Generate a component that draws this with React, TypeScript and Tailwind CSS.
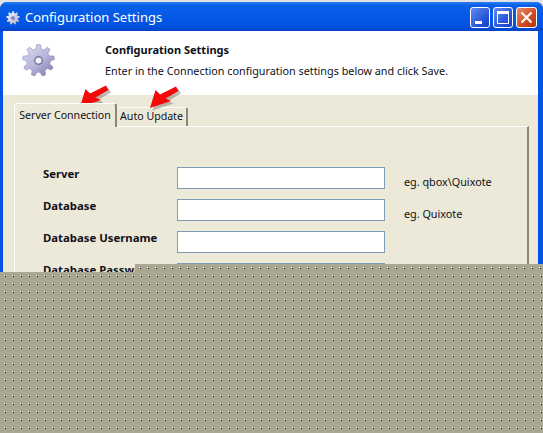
function gearPath(cx: number, cy: number, ro: number, ri: number, n: number) {
  const pts: string[] = [];
  for (let i = 0; i < n; i++) {
    const a = (i / n) * Math.PI * 2 - Math.PI / 2;
    const s = (Math.PI * 2) / n;
    const list: [number, number][] = [
      [ri, a - s * 0.32],
      [ro, a - s * 0.16],
      [ro, a + s * 0.16],
      [ri, a + s * 0.32],
    ];
    for (const [r, t] of list) pts.push(`${(cx + r * Math.cos(t)).toFixed(2)} ${(cy + r * Math.sin(t)).toFixed(2)}`);
  }
  return "M" + pts.join("L") + "Z";
}

function Gear({ size, small }: { size: number; small?: boolean }) {
  return (
    <svg width={size} height={size} viewBox="0 0 32 32" className="block">
      <defs>
        <linearGradient id={small ? "gs" : "gl"} x1="0.1" y1="0" x2="0.9" y2="1">
          <stop offset="0" stopColor={small ? "#f2f1fb" : "#dcdcf2"} />
          <stop offset="0.55" stopColor={small ? "#d2d0e8" : "#b4b3dc"} />
          <stop offset="1" stopColor={small ? "#a8a8c8" : "#7d7da8"} />
        </linearGradient>
      </defs>
      <path d={gearPath(16, 16, 15.5, 11.5, 9)} fill={`url(#${small ? "gs" : "gl"})`} stroke={small ? "none" : "#9090b4"} strokeWidth="0.6" />
      <circle cx="16" cy="16" r="3.6" fill={small ? "#6f8fdc" : "#f4f4f8"} stroke="#77779c" strokeWidth="1.4" />
    </svg>
  );
}

function Arrow() {
  return (
    <svg width="38" height="34" viewBox="0 0 38 34" className="block">
      <path d="M5 23 L10.5 5 L15 9.5 L31 1.5 L33.5 6 L20.5 13.5 L26 16 Z" fill="#5f5f55" opacity="0.4" transform="translate(2.5 2.5)" />
      <path d="M5 23 L10.5 5 L15 9.5 L31 1.5 L33.5 6 L20.5 13.5 L26 16 Z" fill="#f40808" />
    </svg>
  );
}

function Row({ label, hint }: { label: string; hint?: string }) {
  return (
    <div className="flex h-[22px] items-start">
      <div className="w-[134px] text-[11.35px] leading-[14px] font-bold text-[#10101a]">{label}</div>
      <div className="h-[22px] w-[208px] shrink-0 border border-[#7f9db9] bg-white"></div>
      {hint && <div className="ml-[19px] pt-[8px] text-[10.8px] leading-[14px] text-[#10101a]">{hint}</div>}
    </div>
  );
}

const dotted =
  "absolute bg-[#a9a694] bg-[image:conic-gradient(from_270deg_at_1px_1px,#f4f4e8_25%,transparent_0),conic-gradient(from_270deg_at_1px_1px,#22221c_25%,transparent_0)] bg-[length:8px_8px] bg-[position:4px_3px,5px_4px]";

export default function App() {
  return (
    <div className="relative h-[433px] w-[543px] overflow-hidden bg-[#e6e6e6] font-['Noto_Sans',sans-serif]">
      <div className="h-[2px] bg-[#dfe3e6]"></div>
      <div className="flex h-[431px] flex-col overflow-hidden rounded-t-[7px] bg-[#0553e4]">
        <div className="flex h-[29px] shrink-0 items-center bg-[linear-gradient(180deg,#2a7cf2_0%,#0a5fe8_12%,#0458e6_55%,#0352df_85%,#0340c8_100%)] pl-[6px] pr-[6px] pt-[2px]">
          <Gear size={14} small />
          <div className="ml-[5px] text-[13px] leading-none text-white">Configuration Settings</div>
          <div className="ml-auto flex gap-[3px]">
            <div className="relative h-[21px] w-[20px] rounded-[3px] border border-white bg-[linear-gradient(135deg,#5f8cf0,#2450d8_70%,#1a3fc2)]">
              <div className="absolute bottom-[3px] left-[4px] h-[3px] w-[7px] bg-white"></div>
            </div>
            <div className="relative h-[21px] w-[20px] rounded-[3px] border border-white bg-[linear-gradient(135deg,#5f8cf0,#2450d8_70%,#1a3fc2)]">
              <div className="absolute inset-[3px] border border-t-[3px] border-white"></div>
            </div>
            <div className="flex h-[21px] w-[21px] items-center justify-center rounded-[3px] border border-white bg-[linear-gradient(135deg,#ea8a66,#d2491f_60%,#b23412)]">
              <svg width="13" height="13" viewBox="0 0 13 13">
                <path d="M1.5 1.5 L11.5 11.5 M11.5 1.5 L1.5 11.5" stroke="#fff" strokeWidth="2.2" />
              </svg>
            </div>
          </div>
        </div>
        <div className="ml-[3px] mr-[5px] flex min-h-0 flex-1 flex-col bg-[#ece9d8]">
          <div className="flex h-[64px] shrink-0 bg-white">
            <div className="w-[102px] pl-[19px] pt-[13px]">
              <Gear size={33} />
            </div>
            <div className="pt-[12px]">
              <div className="text-[11px] leading-[14px] font-bold text-[#10101a]">Configuration Settings</div>
              <div className="mt-[7px] text-[10.8px] leading-[14px] text-[#10101a]">Enter in the Connection configuration settings below and click Save.</div>
            </div>
          </div>
          <div className="flex h-[31px] shrink-0 items-end pl-[11px]">
            <div className="z-10 -mb-px flex h-[24px] w-[103px] items-center justify-center rounded-t-[3px] border-l border-r-2 border-t border-l-white border-r-[#8a8776] border-t-white bg-[#ece9d8] text-[10.6px] text-[#10101a]">Server Connection</div>
            <div className="flex h-[19px] w-[71px] items-center justify-center rounded-t-[3px] border-r-2 border-t border-r-[#8a8776] border-t-white bg-[#ece9d8] text-[10.6px] text-[#10101a]">Auto Update</div>
          </div>
          <div className="ml-[11px] mr-[9px] flex-1 border-l border-r-2 border-t border-l-white border-r-[#8a8776] border-t-white pl-[28px] pt-[40px]">
            <div className="flex flex-col gap-[10px]">
              <Row label="Server" hint="eg. qbox\Quixote" />
              <Row label="Database" hint="eg. Quixote" />
              <Row label="Database Username" />
              <Row label="Database Password" />
            </div>
          </div>
        </div>
      </div>
      <div className="absolute left-[75px] top-[84px]"><Arrow /></div>
      <div className="absolute left-[145px] top-[85px]"><Arrow /></div>
      <div className={`${dotted} left-0 right-0 top-[272px] bottom-0`}></div>
      <div className={`${dotted} left-[135px] right-0 top-[264px] h-[8px]`}></div>
    </div>
  );
}
